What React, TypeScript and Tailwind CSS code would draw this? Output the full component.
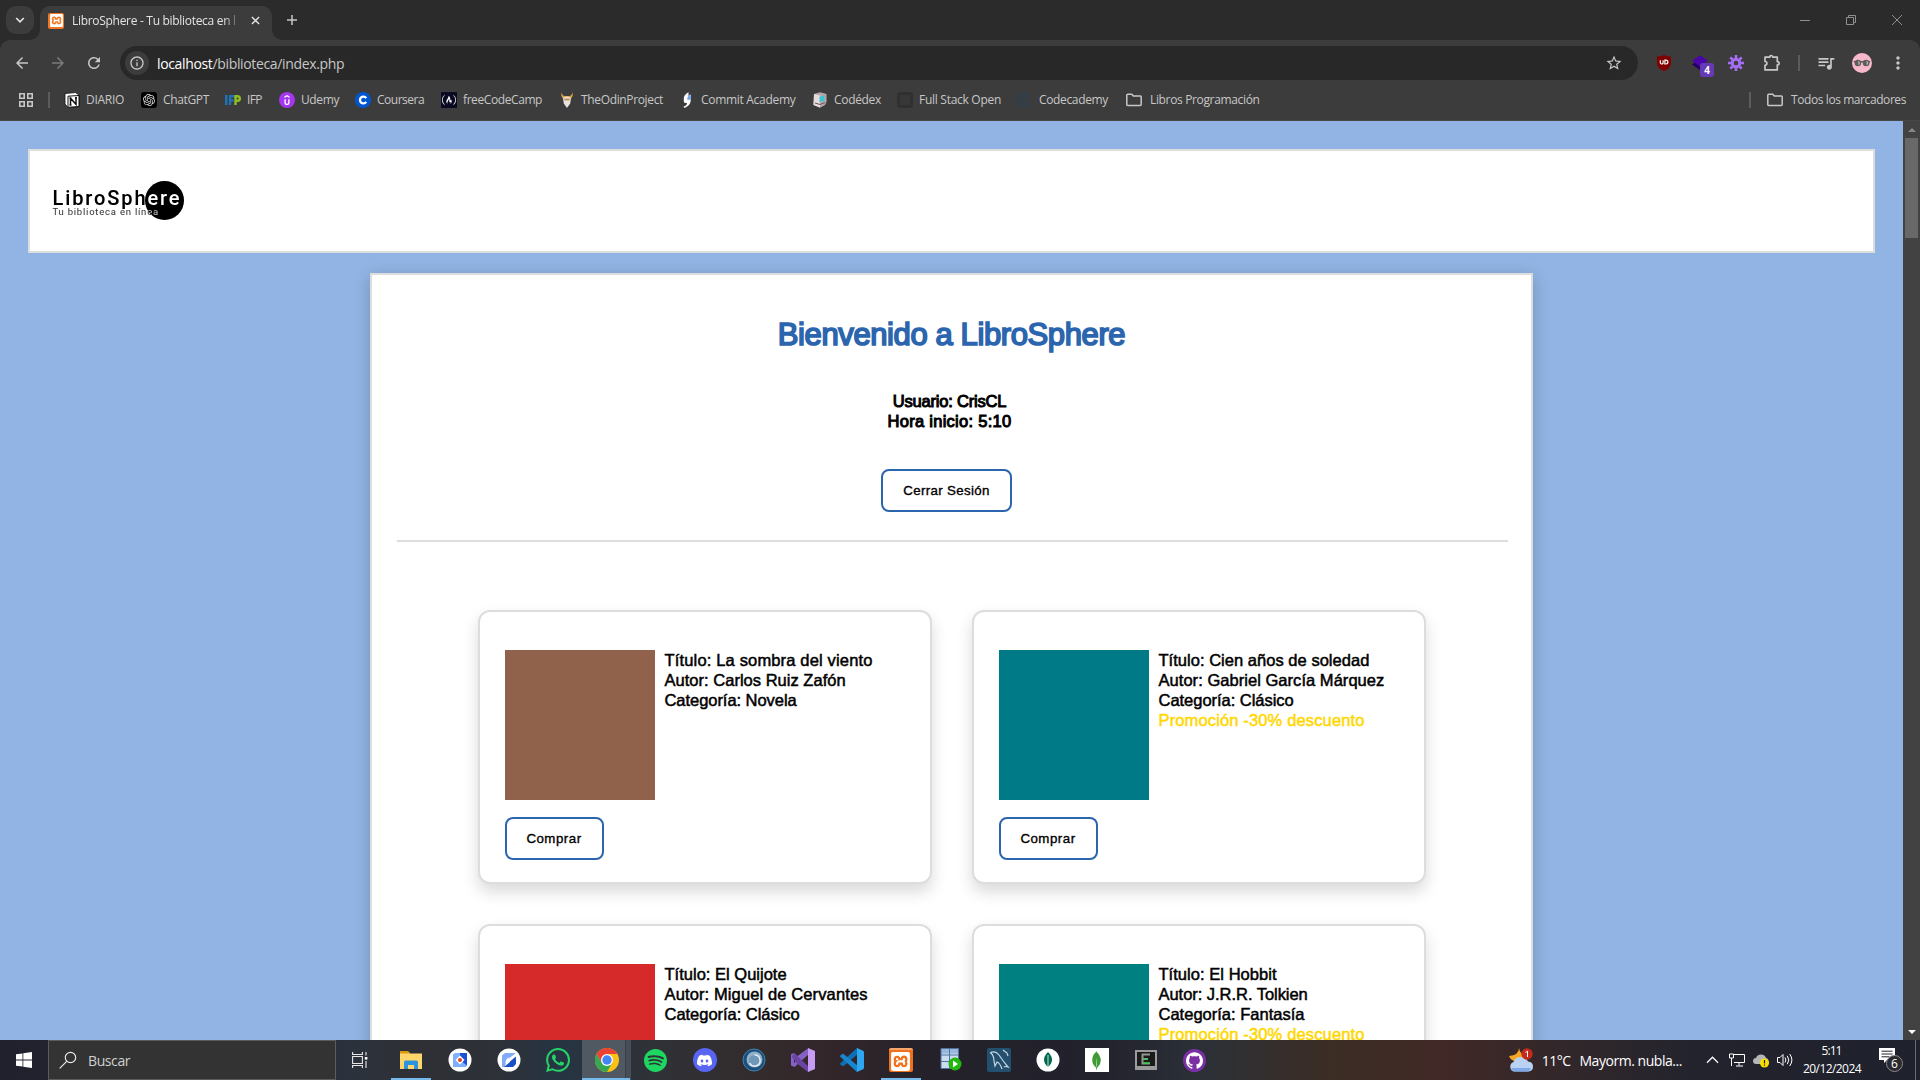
import type { ReactNode } from "react";
import { SiXampp, SiOpenai, SiUdemy, SiFreecodecamp, SiWhatsapp, SiSpotify, SiDiscord, SiMongodb, SiGithub } from "react-icons/si";
import { MdArrowBack, MdArrowForward, MdRefresh, MdStarBorder, MdQueueMusic, MdMoreVert, MdOutlineInfo } from "react-icons/md";

function Folder() {
  return (
    <svg viewBox="0 0 16 16" className="h-4 w-4" fill="none" stroke="#c7c7c7" strokeWidth="1.5">
      <path d="M.8 3.2q0-.9.9-.9h4l1.6 1.6h7q.9 0 .9.9v7.8q0 .9-.9.9H1.7q-.9 0-.9-.9z" />
    </svg>
  );
}

const bookmarks: { label: string; box: string; track: string; icon: ReactNode }[] = [
  { label: "DIARIO", box: "w-[77px]", track: "tracking-[-0.29px]", icon: (
    <svg viewBox="0 0 16 16" className="h-4 w-4"><path d="M1 1.5 11.5.6 15 3v11.5L4 15.4 1 12z" fill="#fff" stroke="#111" strokeWidth=".8" /><path d="M4 4.2 15 3.5v11L4 15.3z" fill="#fff" stroke="#111" strokeWidth="1" /><path d="M6.5 12.8V6.3l5.500 6V5.800M5.500 6.200h2M11 5.800h2M5.500 12.900h2" stroke="#111" strokeWidth="1.500" fill="none" /></svg>) },
  { label: "ChatGPT", box: "w-[84px]", track: "tracking-[-0.35px]", icon: <span className="flex h-4 w-4 items-center justify-center rounded-[3px] bg-black"><SiOpenai size={12} color="#ddd" /></span> },
  { label: "IFP", box: "w-[54px]", track: "tracking-[-0.6px]", icon: (
    <svg viewBox="0 0 16 16" className="h-4 w-4" fill="none" strokeWidth="2.4"><path d="M1.2 3v10M5 13V4.2h4.5M5 8.5h3.5" stroke="#2173b9" /><path d="M10.5 13V4.2h2q2.3 0 2.3 2.3t-2.3 2.3h-2" stroke="#8fbf21" /></svg>) },
  { label: "Udemy", box: "w-[76px]", track: "tracking-[-0.39px]", icon: <span className="flex h-4 w-4 items-center justify-center rounded-full bg-[#a435f0]"><SiUdemy size={10} color="#fff" /></span> },
  { label: "Coursera", box: "w-[86px]", track: "tracking-[-0.5px]", icon: (
    <svg viewBox="0 0 16 16" className="h-4 w-4"><circle cx="8" cy="8" r="8" fill="#0056d2" /><path d="M11.2 6.1A3.4 3.4 0 1 0 11.2 9.9" fill="none" stroke="#fff" strokeWidth="2.3" /></svg>) },
  { label: "freeCodeCamp", box: "w-[118px]", track: "tracking-[-0.41px]", icon: <span className="flex h-4 w-4 items-center justify-center bg-[#0a0a23]"><SiFreecodecamp size={14} color="#fff" /></span> },
  { label: "TheOdinProject", box: "w-[120px]", track: "tracking-[-0.35px]", icon: (
    <svg viewBox="0 0 16 16" className="h-4 w-4"><path d="M2.5.5q1 3.200 2.600 3.500h5.800Q12.500 3.700 13.500.5q1 4-1.700 6H4.200q-2.700-2-1.700-6z" fill="#d8a04a" /><path d="M4 6q4-3 8 0l-.8 5.500L8 16l-3.200-4.500z" fill="#e8e4dc" /><path d="M5 6.500h6l-.8 2H5.800z" fill="#c98d5a" /></svg>) },
  { label: "Commit Academy", box: "w-[133px]", track: "tracking-[-0.3px]", icon: (
    <svg viewBox="0 0 16 16" className="h-4 w-4"><path d="M9.500.3Q5 3 4.800 6v3.500q0 2 3.200 1.500Q8 13.500 4.500 14.500L5.500 16q6-2.500 6.200-7.500V2.500L9.500 4z" fill="#fff" /><path d="M11.700 2.500v5L8.500 8q-1-2.500 1-4z" fill="#6aa5f2" /></svg>) },
  { label: "Codédex", box: "w-[85px]", track: "tracking-[-0.32px]", icon: (
    <svg viewBox="0 0 16 16" className="h-4 w-4"><path d="M2 2 8 .3 14.500 2v8L13 13l-5 2.700L1.500 13z" fill="#b9a6a8" /><path d="M2 2 8 3.500V15.500L1.500 13z" fill="#e6dcdc" /><path d="m7.500 4.800 5-1.500v5.500l-5 1.500z" fill="#3cc6d4" /><path d="M3 11 8 12.500l5-2" stroke="#6a5558" fill="none" /></svg>) },
  { label: "Full Stack Open", box: "w-[120px]", track: "tracking-[-0.28px]", icon: <span className="h-4 w-4 rounded-[3px] border-[3px] border-[#303030] bg-[#373737]" /> },
  { label: "Codecademy", box: "w-[109px]", track: "tracking-[-0.35px]", icon: (
    <svg viewBox="0 0 16 16" className="h-4 w-4" fill="none" stroke="#20415b" strokeWidth="1.200"><path d="M1 1.500h9v13H1zM7.500 6q-3-1-3 2t3 2M12.500 14h3.500" /></svg>) },
  { label: "Libros Programación", box: "w-[140px] gap-[8px]!", track: "tracking-[-0.35px]", icon: <Folder /> },
];

function TabStrip() {
  return (
    <div className="flex h-10 bg-[#2b2b2b]">
      <div className="mt-[6px] ml-[6px] flex h-7 w-7 items-center justify-center rounded-[10px] bg-[#3c3c3c]">
        <svg viewBox="0 0 10 10" className="h-[10px] w-[10px]" fill="none" stroke="#e3e3e3" strokeWidth="1.700"><path d="m1.200 3 3.800 3.800L8.800 3" /></svg>
      </div>
      <div className="mt-[30px] ml-[-4px] h-[10px] w-[10px] bg-[radial-gradient(circle_at_0_0,#2b2b2b_9.500px,#3c3c3c_10px)]" />
      <div className="mt-[6px] flex h-[34px] w-[232px] items-center rounded-t-[10px] bg-[#3c3c3c] pb-[5px] pl-2">
        <span className="flex h-4 w-4 items-center justify-center rounded-[2px] bg-[#f37623]"><SiXampp size={13} color="#fff" /></span>
        <div className="ml-2 w-[168px] overflow-hidden text-[12px] leading-4 tracking-[-0.3px] whitespace-nowrap text-[#e3e3e3] [mask-image:linear-gradient(to_right,#000_152px,transparent_169px)]">
          LibroSphere - Tu biblioteca en l
        </div>
        <svg viewBox="0 0 10 10" className="ml-[11px] h-[9px] w-[9px]" stroke="#e3e3e3" strokeWidth="1.600"><path d="m1 1 8 8M9 1 1 9" /></svg>
      </div>
      <div className="mt-[30px] h-[10px] w-[10px] bg-[radial-gradient(circle_at_100%_0,#2b2b2b_9.500px,#3c3c3c_10px)]" />
      <svg viewBox="0 0 10 10" className="mt-[15px] ml-[5px] h-[10px] w-[10px]" stroke="#c7c7c7" strokeWidth="1.500"><path d="M5 0v10M0 5h10" /></svg>
      <div className="mr-[18px] ml-auto flex h-10 items-center gap-9 text-[#8f8f8f]">
        <svg viewBox="0 0 10 10" className="h-[10px] w-[10px]" stroke="currentColor"><path d="M0 5.500h10" /></svg>
        <svg viewBox="0 0 10 10" className="h-[10px] w-[10px]" fill="none" stroke="currentColor"><path d="M.5 2.500h7v7h-7zM2.500 2.500v-2h7v7h-2" /></svg>
        <svg viewBox="0 0 10 10" className="h-[10px] w-[10px]" stroke="currentColor"><path d="m0 0 10 10M10 0 0 10" /></svg>
      </div>
    </div>
  );
}

function Toolbar() {
  return (
    <div className="bg-[#2b2b2b]">
      <div className="flex h-[46px] items-center rounded-t-[10px] bg-[#3c3c3c]">
        <div className="flex w-[120px] items-center text-[#c7c7c7]">
          <MdArrowBack size={18} className="ml-[13px]" />
          <MdArrowForward size={18} className="ml-[18px] text-[#7b7b7b]" />
          <MdRefresh size={18} className="ml-[18px]" />
        </div>
        <div className="flex h-[34px] w-[1518px] items-center rounded-full bg-[#282828]">
          <span className="ml-[5px] flex h-6 w-6 items-center justify-center rounded-full bg-[#3c3c3c]"><MdOutlineInfo size={16} color="#c7c7c7" /></span>
          <span className="ml-2 text-[14px] tracking-[-0.35px] text-[#c7c7c7]"><span className="text-white">localhost</span>/biblioteca/index.php</span>
          <MdStarBorder size={18} color="#c7c7c7" className="mr-[15px] ml-auto" />
        </div>
        <div className="ml-[18px] flex items-center">
          <svg viewBox="0 0 16 16" className="h-4 w-4"><path d="M8 0q3 1.600 7 1.500V8q0 5-7 8-7-3-7-8V1.500Q5 1.600 8 0z" fill="#800000" /><path d="M4.300 5.200v2.600q0 1.200 1.400 1.200T7.100 7.800V5.200M8.900 5.200h1q2 0 2 1.900T9.900 9h-1z" fill="none" stroke="#fff" strokeWidth="1.200" /></svg>
          <span className="relative ml-5 h-4 w-4">
            <svg viewBox="0 0 16 16" className="h-4 w-4"><path d="m0 9.500 8 5.500 8-5.500-8-5.500z" fill="#230063" /><path d="m0 5.800 8 5.700 8-5.700L8 .3z" fill="#4a06a8" /></svg>
            <span className="absolute top-2 left-2 flex h-[14px] w-[14px] items-center justify-center rounded-[3px] bg-[#6639b7] text-[10px] font-bold text-white">4</span>
          </span>
          <svg viewBox="0 0 16 16" className="ml-5 h-4 w-4"><g stroke="#a56cf5" strokeWidth="2.600"><path d="M8 0v4M8 12v4M0 8h4M12 8h4M2.300 2.300l2.800 2.800M10.900 10.900l2.800 2.800M13.700 2.300l-2.800 2.800M5.100 10.900l-2.800 2.800" /></g><circle cx="8" cy="8" r="3.800" fill="none" stroke="#a56cf5" strokeWidth="3" /></svg>
          <svg viewBox="0 0 18 18" className="ml-[19px] h-[18px] w-[18px]" fill="none" stroke="#c7c7c7" strokeWidth="1.700" strokeLinejoin="round"><path d="M2 3.200h4.800q0-1.700 1.500-1.700t1.500 1.700h4.500v4.500q1.900 0 1.900 1.600t-1.900 1.600v5H2v-4.600q1.900-.2 1.900-2T2 7.500z" /></svg>
          <span className="ml-[17px] h-4 w-[2px] bg-[#5c5c5c]" />
          <MdQueueMusic size={20} color="#c7c7c7" className="ml-4" />
          <svg viewBox="0 0 20 20" className="ml-[16px] h-5 w-5"><circle cx="10" cy="10" r="10" fill="#f8b8cc" /><path d="M1.800 8.800h16.400" stroke="#4a3c40" strokeWidth="1.200" /><circle cx="5.900" cy="10" r="3.300" fill="#5d5d5d" /><circle cx="14.100" cy="10" r="3.300" fill="#5d5d5d" /><path d="M6.500 7.500q2.500 2.500 0 5zM14.700 7.500q2.500 2.500 0 5z" fill="#c9c9c9" /></svg>
          <MdMoreVert size={20} color="#c7c7c7" className="ml-4" />
        </div>
      </div>
    </div>
  );
}

function Bookmarks() {
  return (
    <div className="flex h-[35px] items-center border-b border-[#484848] bg-[#3c3c3c] pb-[7px] text-[12px] leading-4 whitespace-nowrap text-[#c7c7c7]">
      <svg viewBox="0 0 14 14" className="ml-[19px] h-[14px] w-[14px]" fill="none" stroke="#c7c7c7" strokeWidth="1.600"><path d="M.8.8h4.400v4.400H.8zM8.800.8h4.400v4.400H8.800zM.8 8.800h4.400v4.400H.8zM8.800 8.800h4.400v4.400H8.800z" /></svg>
      <span className="ml-[15px] h-4 w-[2px] bg-[#5c5c5c]" />
      <div className="ml-[14px] flex">
        {bookmarks.map((b) => (
          <div key={b.label} className={"flex items-center gap-[6px] " + b.box}>
            {b.icon}
            <span className={b.track}>{b.label}</span>
          </div>
        ))}
      </div>
      <div className="mr-[14px] ml-auto flex items-center">
        <span className="h-4 w-[2px] bg-[#5c5c5c]" />
        <span className="ml-4"><Folder /></span>
        <span className="ml-2 tracking-[-0.42px]">Todos los marcadores</span>
      </div>
    </div>
  );
}

const books = [
  { title: "La sombra del viento", author: "Carlos Ruiz Zafón", cat: "Novela", color: "bg-[#91624b]", promo: false, t: ["tracking-[0.16px]", "tracking-[0.02px]", "tracking-[-0.05px]"] },
  { title: "Cien años de soledad", author: "Gabriel García Márquez", cat: "Clásico", color: "bg-[#007a87]", promo: true, t: ["tracking-[0.03px]", "tracking-[0.04px]", "tracking-[-0.03px]"] },
  { title: "El Quijote", author: "Miguel de Cervantes", cat: "Clásico", color: "bg-[#d62929]", promo: false, t: ["tracking-[0.01px]", "tracking-[0.12px]", "tracking-[-0.03px]"] },
  { title: "El Hobbit", author: "J.R.R. Tolkien", cat: "Fantasía", color: "bg-[#008080]", promo: true, t: ["tracking-[0.04px]", "tracking-[-0.04px]", "tracking-[0.01px]"] },
];

function Page() {
  return (
    <main className="w-[1903px] overflow-hidden bg-[#91b4e4] pt-7 font-['Liberation_Sans',sans-serif] whitespace-nowrap text-black">
      <header className="mx-7 flex h-[104px] items-center border-2 border-[#ddd] bg-white">
        <div className="relative isolate ml-[22px] h-10 w-[140px] bg-white">
          <div className="absolute left-[93px] h-[39px] w-[39px] rounded-full bg-black" />
          <div className="absolute top-[5px] left-[0.500px] font-['Roboto',sans-serif] text-white mix-blend-difference">
            <div className="text-[20px] leading-6 font-medium tracking-[1.900px]">LibroSphere</div>
            <div className="mt-[-4px] text-[9.500px] leading-3 tracking-[0.78px] text-[#c8c8c8]">Tu biblioteca en línea</div>
          </div>
        </div>
      </header>
      <section className="mx-auto mt-5 flex h-[1400px] w-[1163px] flex-col items-center border-2 border-[#ddd] bg-white px-[25px] shadow-[0_4px_16px_rgba(0,0,0,0.2)]">
        <h1 className="mt-[42px] text-[31px] leading-9 tracking-[-0.39px] text-[#2b65ae] [-webkit-text-stroke:1.700px_#2b65ae]">Bienvenido a LibroSphere</h1>
        <div className="mt-[38px] mr-1 flex flex-col items-center text-[16.500px] leading-5 [-webkit-text-stroke:1px_#000]">
          <p className="tracking-[-0.2px]">Usuario: CrisCL</p>
          <p className="tracking-[0.27px]">Hora inicio: 5:10</p>
        </div>
        <button className="mt-[38px] mr-[10px] h-[43px] w-[131px] rounded-lg border-2 border-[#2b65ae] text-[13.300px] tracking-[0.35px] [-webkit-text-stroke:0.35px_black]">Cerrar Sesión</button>
        <hr className="mt-7 h-[2px] w-[1111px] self-start border-0 bg-[#ddd]" />
        <div className="mt-[68px] grid grid-cols-[454px_454px] gap-10">
          {books.map((b) => (
            <article key={b.title} className="h-[274px] rounded-xl border-2 border-[#ddd] bg-white px-[25px] pt-[38px] shadow-[0_8px_16px_rgba(0,0,0,0.15)]">
              <div className="flex">
                <div className={"h-[150px] w-[150px] " + b.color} />
                <div className="ml-[10px] flex flex-col text-[16.500px] leading-5 [-webkit-text-stroke:0.5px_#000]">
                  <span className={b.t[0]}>{"Título: " + b.title}</span>
                  <span className={b.t[1]}>{"Autor: " + b.author}</span>
                  <span className={b.t[2]}>{"Categoría: " + b.cat}</span>
                  {b.promo && <span className="tracking-[0.14px] text-[#ffd700] [-webkit-text-stroke:0.5px_#ffd700]">Promoción -30% descuento</span>}
                </div>
              </div>
              <button className="mt-[17px] h-[43px] w-[99px] rounded-lg border-2 border-[#2b65ae] text-[13.300px] tracking-[0.5px] [-webkit-text-stroke:0.35px_black]">Comprar</button>
            </article>
          ))}
        </div>
      </section>
    </main>
  );
}

function ScrollBar() {
  return (
    <div className="flex w-[17px] flex-col items-center bg-[#424242]">
      <div className="flex h-[17px] items-center"><span className="h-0 w-0 border-x-4 border-b-4 border-x-transparent border-b-[#868686]" /></div>
      <div className="h-[100px] w-[13px] bg-[#686868]" />
      <div className="mt-auto flex h-[17px] items-center"><span className="h-0 w-0 border-x-4 border-t-4 border-x-transparent border-t-white" /></div>
    </div>
  );
}

const apps: ReactNode[] = [
  <svg viewBox="0 0 24 24" className="h-6 w-6"><path d="M1 3h8l2 2v4H1z" fill="#d99a12" /><path d="M1 5.500h22V21H1z" fill="#ffd66b" /><path d="M5 21v-7q0-1.500 1.500-1.500h11q1.500 0 1.500 1.500v7h-4v-4H9v4z" fill="#2f93dc" /></svg>,
  <svg viewBox="0 0 24 24" className="h-6 w-6"><circle cx="12" cy="12" r="11.500" fill="#fff" /><path d="M5 6.500 7 5h12v12.500L17.500 19H5z" fill="#7fb0ff" /><path d="M12 5h7v12.500L12 12z" fill="#1d4fd8" /><path d="m12 7.500 4.500 4.500-4.500 4.500L7.500 12z" fill="#fff" /><circle cx="12" cy="12" r="2" fill="#e0431c" /></svg>,
  <svg viewBox="0 0 24 24" className="h-6 w-6"><circle cx="12" cy="12" r="11.500" fill="#fff" /><path d="M5 7.500 8 5H19l-5.500 4.500L9 14l-1 5H5z" fill="#7fabf8" /><path d="M19 8v8l-3 3H7l6-5 .500-4z" fill="#1a4fc4" /><path d="M8.500 15q0-5 5-5.500L19 5v3.500L13.500 13z" fill="#fff" /></svg>,
  <SiWhatsapp size={24} color="#25d366" />,
  <svg viewBox="0 0 24 24" className="h-6 w-6"><circle cx="12" cy="12" r="12" fill="#fbc116" /><path d="M1.600 6A12 12 0 0 0 12 24l5.200-9L12 12 6.800 15z" fill="#34a853" /><path d="M1.600 6A12 12 0 0 1 22.400 6H12v6l-5.200 3z" fill="#ea4335" /><circle cx="12" cy="12" r="6" fill="#fff" /><circle cx="12" cy="12" r="4.700" fill="#4285f4" /></svg>,
  <SiSpotify size={23} color="#1ed760" />,
  <span className="flex h-6 w-6 items-center justify-center rounded-full bg-[#5865f2]"><SiDiscord size={15} color="#fff" /></span>,
  <svg viewBox="0 0 24 24" className="h-6 w-6"><circle cx="12" cy="12" r="11" fill="#1d4e7a" stroke="#3b86b4" /><circle cx="12.500" cy="11.500" r="8" fill="#8fb0c9" /><circle cx="12.500" cy="12.500" r="5.500" fill="#6f97b8" /><path d="M12.500 7a5.500 5.500 0 1 1-4.800 8" fill="none" stroke="#e3ecf3" strokeWidth="1.500" /></svg>,
  <svg viewBox="0 0 24 24" className="h-6 w-6"><path d="M0 6.300 3 5l3.500 3L17.500 0 18 6 3.500 19 0 17.500z M3 9v6l3-3z" fill="#8661c5" fillRule="evenodd" /><path d="M3 5 17 18v6L6 15.500 1 9z" fill="#6a45a5" /><path d="M17 0 24 3v18l-7 3z" fill="#c79cf5" /></svg>,
  <svg viewBox="0 0 24 24" className="h-6 w-6"><path d="m17 0 1 6L3 18.500l-2.700-2q-.6-.7 0-1.300z" fill="#0f6fb4" /><path d="M3 5.500 18 18l-1 6L.3 8.800q-.6-.7 0-1.300z" fill="#1687ce" /><path d="m17 0 6 2.800q1 .5 1 1.500v15.400q0 1-1 1.500L17 24z" fill="#2ea7f2" /></svg>,
  <span className="flex h-6 w-6 items-center justify-center rounded-[2px] border-t-2 border-[#f9a66c] bg-[#f0701c]"><SiXampp size={19} color="#fff" /></span>,
  <svg viewBox="0 0 24 24" className="h-6 w-6"><path d="M3 .5h17.500v20H3z" fill="#c9dcf2" /><path d="M3 .5h17.500v5H3z" fill="#98b8de" /><path d="M3 .5h17.500v20H3zM3 7h17.500M3 13.500h17.500M11.500.5v20" stroke="#52719d" fill="none" /><circle cx="17" cy="16" r="6.500" fill="#23b80e" /><path d="m15 12.500 5 3.500-5 3.500z" fill="#fff" /></svg>,
  <svg viewBox="0 0 24 24" className="h-6 w-6"><rect width="24" height="24" rx="2" fill="#23506f" /><path d="M3 5q5-3 9 2 4 6 9 12-3-1-4 0M4 5q3 3 3 8l1 5 2-4q3 1 5 7M16 2l4 3 1 3" fill="none" stroke="#c9d6e0" strokeWidth="1.200" /></svg>,
  <svg viewBox="0 0 24 24" className="h-6 w-6"><circle cx="12" cy="12" r="11.500" fill="#fff" /><path d="M12 4q8 8 0 15-8-7 0-15z" fill="#00684a" /><path d="M12 7v12" stroke="#fff" strokeWidth=".8" /></svg>,
  <span className="flex h-6 w-6 items-center justify-center bg-white"><SiMongodb size={19} color="#3f9c35" /></span>,
  <svg viewBox="0 0 24 24" className="h-6 w-6"><path d="M1 2h22v20H1z" fill="#9b9b9b" /><path d="M3 4h18v14H3z" fill="#1b1b1b" /><path d="M16 6.500H8.500v9H16M8.500 11H14" fill="none" stroke="#8d9b8d" strokeWidth="2" /><path d="M10 11h4M10 14.800h6" stroke="#24d83c" strokeWidth="1.200" /></svg>,
  <span className="flex h-[23px] w-[23px] items-center justify-center rounded-full bg-[#7b2fa5]"><SiGithub size={17} color="#fff" /></span>,
];

function Taskbar() {
  return (
    <footer className="flex h-10 items-center bg-[linear-gradient(to_right,#20212d_0px,#23232f_48px,#2b323d_350px,#2f3036_410px,#2d3138_500px,#263443_560px,#2f3237_650px,#332b2c_760px,#33262a_830px,#24212a_930px,#22222c_1100px,#2b3037_1200px,#3c2d25_1330px,#402826_1450px,#30272b_1580px,#22232d_1700px,#1f212c_1920px)] whitespace-nowrap text-white">
      <svg viewBox="0 0 16 16" className="ml-4 h-4 w-4" fill="#fff"><path d="M0 2.300 6.500 1.400v6.200H0zM7.300 1.300 16 0v7.600H7.300zM0 8.400h6.500v6.200L0 13.700zM7.300 8.400H16V16l-8.700-1.300z" /></svg>
      <div className="ml-4 flex h-10 w-[288px] items-center border border-[#5c5c5c] bg-[#333]">
        <svg viewBox="0 0 18 18" className="ml-[10px] h-[18px] w-[18px]" fill="none" stroke="#e8e8e8" strokeWidth="1.200"><circle cx="11.500" cy="6.500" r="5.200" /><path d="m7.700 10.300-7 7" /></svg>
        <span className="ml-[11px] text-[14px] tracking-[-0.4px] text-[#d0d0d0]">Buscar</span>
      </div>
      <svg viewBox="0 0 16 16" className="ml-4 h-4 w-4" fill="none" stroke="#e8e8e8" strokeWidth="1.100"><path d="M.6 0v2.500h9.800V0M.6 4.500h9.800v7H.6zM.6 16v-2.500h9.800V16M14 0v3.500M14 9v7" /><path d="M12.800 5h2.600v2.600h-2.600z" fill="#fff" stroke="none" /></svg>
      <div className="ml-[18px] flex h-10">
        {apps.map((a, i) => (
          <div key={i} className={"relative flex w-[49px] items-center justify-center " + (i === 4 ? "bg-[linear-gradient(to_right,#505862_43px,#3b3f46_43px,#3b3f46_44px,#484e58_44px)]" : "")}>
            {a}
            {(i === 0 || i === 10) && <span className="absolute bottom-0 left-[5px] h-[2px] w-10 bg-[#76b9ed]" />}
            {i === 4 && <span className="absolute bottom-0 left-0 h-[2px] w-12 bg-[#76b9ed]" />}
          </div>
        ))}
      </div>
      <div className="ml-auto flex h-10 items-center">
        <svg viewBox="0 0 24 24" className="h-6 w-6"><path d="M10 0q0 7-10 8 2 6 9 5t7-6q-5-1-6-7z" fill="#f6a623" /><path d="M5 23.500a5 5 0 0 1-.5-9.500Q6 9 11.500 9T19 13.500q5 .5 5 5t-4.500 5z" fill="#b9d2f3" /><path d="M2 20h20q-1 3-3 3.500H5Q2.500 23 2 20z" fill="#7da9e6" /><circle cx="18" cy="6" r="5.700" fill="#c42b1c" /><path d="m16.500 4.500 2-1.300V9" fill="none" stroke="#fff" /></svg>
        <span className="ml-[9px] text-[14px] tracking-[-0.55px]">11°C</span>
        <span className="ml-[9px] text-[14px] tracking-[-0.46px]">Mayorm. nubla...</span>
        <svg viewBox="0 0 14 8" className="ml-6 h-2 w-[13px]" fill="none" stroke="#fff" strokeWidth="1.300"><path d="m1 7 6-6 6 6" /></svg>
        <svg viewBox="0 0 16 14" className="ml-[10px] h-[14px] w-4" fill="none" stroke="#fff"><path d="M4.500 1.500h11v8H5M10 9.500v3M7 13h7M.5 1h4v4h-4zM2.500 5v8" /></svg>
        <svg viewBox="0 0 16 16" className="ml-2 h-4 w-4"><path d="M3 12a3 3 0 0 1 0-6Q4 2.500 8 2.500T13 6q3 .5 3 6z" fill="#b6b6b6" /><circle cx="11.500" cy="11" r="4.500" fill="#f9e000" /><path d="M11.500 8v3.500M11.500 12.500v1.300" stroke="#222" strokeWidth="1.200" /></svg>
        <svg viewBox="0 0 16 16" className="ml-2 h-4 w-4" fill="none" stroke="#fff"><path d="M.5 5.500h2.500L6 2.500v11l-3-3H.5zM8 5.500q1.800 2.500 0 5M10.300 3.800q3 4.200 0 8.400M12.700 2q4.400 6 0 12" /></svg>
        <div className="ml-[9px] flex w-[60px] flex-col items-center text-[12px] leading-[18px] tracking-[-0.58px]">
          <span className="mr-px tracking-[-0.9px]">5:11</span>
          <span>20/12/2024</span>
        </div>
        <div className="relative ml-[17px] h-[26px] w-6">
          <svg viewBox="0 0 16 16" className="mt-px h-4 w-4"><path d="M0 0h16v12H8l-3 3v-3H0z" fill="#fff" /><path d="M2.500 3.200h11M2.500 6h11M2.500 8.800h8" stroke="#22232d" /></svg>
          <span className="absolute top-2 left-[7px] flex h-[17px] w-[17px] items-center justify-center rounded-full border border-[#8a8a8a] bg-[#2a2a2e] text-[12px]">6</span>
        </div>
        <span className="mr-1 ml-3 h-10 w-px bg-[#6b6b73]" />
      </div>
    </footer>
  );
}

export default function App() {
  return (
    <div className="flex h-[1080px] w-[1920px] flex-col overflow-hidden font-['Open_Sans',sans-serif]">
      <TabStrip />
      <Toolbar />
      <Bookmarks />
      <div className="flex h-[919px]">
        <Page />
        <ScrollBar />
      </div>
      <Taskbar />
    </div>
  );
}
